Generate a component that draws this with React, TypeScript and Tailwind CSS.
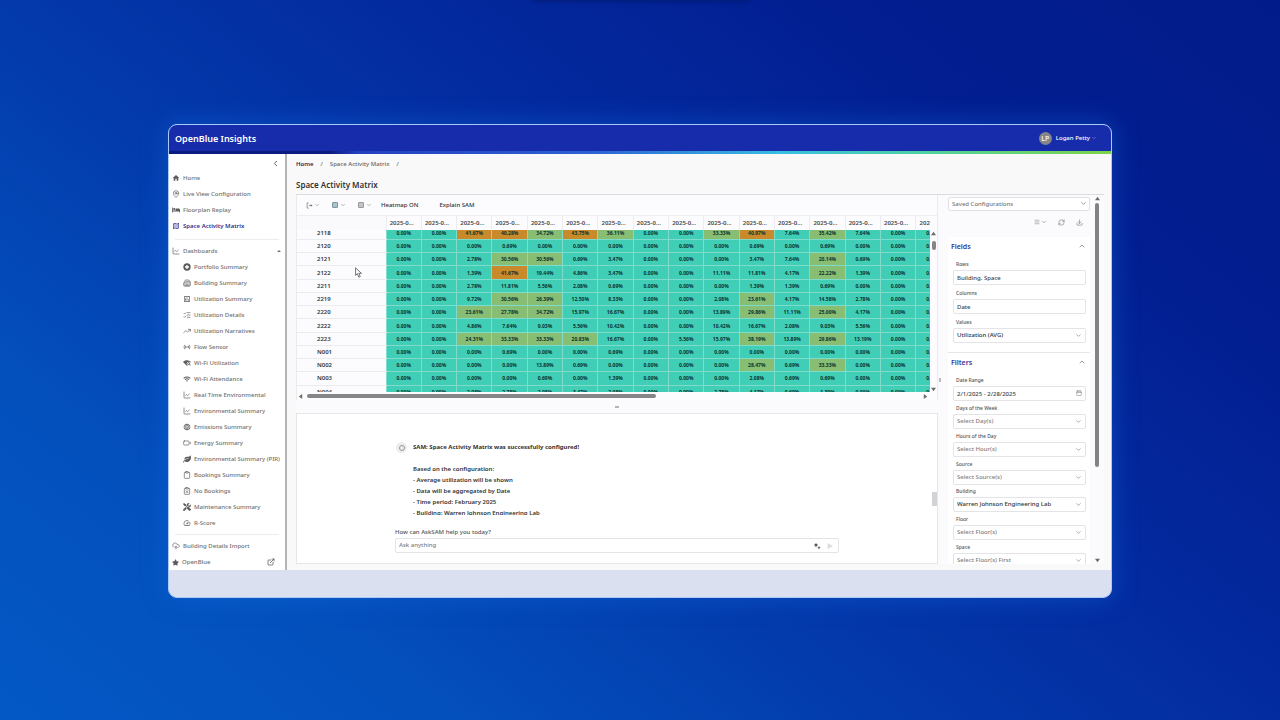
import type { ComponentType, ReactNode } from 'react';
import {
  Battery,
  Building2,
  Calendar,
  ChartLine,
  ChevronDown,
  ChevronLeft,
  ChevronUp,
  Clipboard,
  ClipboardX,
  CloudUpload,
  Download,
  ExternalLink,
  ListChecks,
  MapPin,
  Menu,
  RefreshCw,
  TrendingUp,
} from 'lucide-react';
import { FaBed, FaLeaf, FaStar, FaTools } from 'react-icons/fa';
import { MdHome, MdLanguage, MdOutlineAssessment, MdOutlineMap, MdOutlineSpeed, MdSensors, MdWifi, MdWifiFind } from 'react-icons/md';

type Icon = ComponentType<{ className?: string }>;

interface NavItem {
  label: string;
  icon: Icon;
  active?: boolean;
}

const PortfolioIcon: Icon = ({ className }) => (
  <svg className={className} viewBox="0 0 24 24">
    <circle cx="12" cy="12" r="11" fill="currentColor" />
    <path d="M12 6v12M6 12h12" stroke="white" strokeWidth="4" fill="none" />
  </svg>
);

const ExportIcon: Icon = ({ className }) => (
  <svg className={className} viewBox="0 0 24 24" fill="none" stroke="currentColor" strokeWidth="2.5">
    <path d="M9 3H4v18h5M10 12h11" />
    <path d="M16 7l6 5-6 5z" fill="currentColor" stroke="none" />
  </svg>
);

const SparkleIcon: Icon = ({ className }) => (
  <svg className={className} viewBox="0 0 24 24" fill="currentColor">
    <path d="M9 2l2 5 5 2-5 2-2 6-2-6-5-2 5-2z" />
    <path d="M18 12l1.500 3.500L23 17l-3.500 1.500L18 22l-1.500-3.500L13 17l3.500-1.500z" />
  </svg>
);

const SendIcon: Icon = ({ className }) => (
  <svg className={className} viewBox="0 0 24 24" fill="none" stroke="currentColor" strokeWidth="2.5">
    <path d="M4 3l17 9-17 9v-7l9-2-9-2z" />
  </svg>
);

const topNav: NavItem[] = [
  { label: 'Home', icon: MdHome },
  { label: 'Live View Configuration', icon: MapPin },
  { label: 'Floorplan Replay', icon: FaBed },
  { label: 'Space Activity Matrix', icon: MdOutlineMap, active: true },
];

const dashboards: NavItem[] = [
  { label: 'Portfolio Summary', icon: PortfolioIcon },
  { label: 'Building Summary', icon: Building2 },
  { label: 'Utilization Summary', icon: MdOutlineAssessment },
  { label: 'Utilization Details', icon: ListChecks },
  { label: 'Utilization Narratives', icon: TrendingUp },
  { label: 'Flow Sensor', icon: MdSensors },
  { label: 'Wi-Fi Utilization', icon: MdWifiFind },
  { label: 'Wi-Fi Attendance', icon: MdWifi },
  { label: 'Real Time Environmental', icon: ChartLine },
  { label: 'Environmental Summary', icon: ChartLine },
  { label: 'Emissions Summary', icon: MdLanguage },
  { label: 'Energy Summary', icon: Battery },
  { label: 'Environmental Summary (PIR)', icon: FaLeaf },
  { label: 'Bookings Summary', icon: Clipboard },
  { label: 'No Bookings', icon: ClipboardX },
  { label: 'Maintenance Summary', icon: FaTools },
  { label: 'R-Score', icon: MdOutlineSpeed },
];

const matrix: { space: string; values: number[] }[] = [
  { space: '2118', values: [0, 0, 41.67, 40.28, 34.72, 43.75, 36.11, 0, 0, 33.33, 40.97, 7.64, 35.42, 7.64, 0, 0] },
  { space: '2120', values: [0, 0, 0, 0.69, 0, 0, 0, 0, 0, 0, 0.69, 0, 0.69, 0, 0, 0] },
  { space: '2121', values: [0, 0, 2.78, 30.56, 30.56, 0.69, 3.47, 0, 0, 0, 3.47, 7.64, 20.14, 0.69, 0, 0] },
  { space: '2122', values: [0, 0, 1.39, 41.67, 19.44, 4.86, 3.47, 0, 0, 11.11, 11.81, 4.17, 22.22, 1.39, 0, 0] },
  { space: '2211', values: [0, 0, 2.78, 11.81, 5.56, 2.08, 0.69, 0, 0, 0, 1.39, 1.39, 0.69, 0, 0, 0] },
  { space: '2219', values: [0, 0, 9.72, 30.56, 26.39, 12.5, 8.33, 0, 0, 2.08, 23.61, 4.17, 14.58, 2.78, 0, 0] },
  { space: '2220', values: [0, 0, 23.61, 27.78, 34.72, 15.97, 16.67, 0, 0, 13.89, 29.86, 11.11, 25, 4.17, 0, 0] },
  { space: '2222', values: [0, 0, 4.86, 7.64, 9.03, 5.56, 10.42, 0, 0, 10.42, 16.67, 2.08, 9.03, 5.56, 0, 0] },
  { space: '2223', values: [0, 0, 24.31, 33.33, 33.33, 20.83, 16.67, 0, 5.56, 15.97, 38.19, 13.89, 29.86, 13.19, 0, 0] },
  { space: 'N001', values: [0, 0, 0, 0.69, 0, 0, 0.69, 0, 0, 0, 0, 0, 0, 0, 0, 0] },
  { space: 'N002', values: [0, 0, 0, 0, 13.89, 0.69, 0, 0, 0, 0, 28.47, 0.69, 33.33, 0, 0, 0] },
  { space: 'N003', values: [0, 0, 0, 0, 0.69, 0, 1.39, 0, 0, 0, 2.08, 0.69, 0.69, 0, 0, 0] },
  { space: 'N004', values: [0, 0, 2.08, 2.78, 2.08, 3.47, 2.08, 0, 0, 2.78, 4.17, 0.69, 1.39, 0, 0, 0] },
];

const filters = [
  { id: 'days', label: 'Days of the Week', value: 'Select Day(s)' },
  { id: 'hours', label: 'Hours of the Day', value: 'Select Hour(s)' },
  { id: 'source', label: 'Source', value: 'Select Source(s)' },
  { id: 'building', label: 'Building', value: 'Warren Johnson Engineering Lab', filled: true },
  { id: 'floor', label: 'Floor', value: 'Select Floor(s)' },
  { id: 'space', label: 'Space', value: 'Select Floor(s) First' },
];

// Heat levels: 40%+ is busy, 20%+ is moderate
const heatClass = (value: number) => {
  if (value >= 40) return 'bg-[#c98a2b]';
  if (value >= 20) return 'bg-[#88bd74]';
  return 'bg-[#41ceb7]';
};

function NavLink({ item, nested = false }: { item: NavItem; nested?: boolean }) {
  const ItemIcon = item.icon;
  return (
    <li>
      <a
        href="#"
        className={`flex h-4 items-center gap-[3px] whitespace-nowrap ${nested ? 'pl-[14px]' : 'pl-[3px]'} ${item.active ? 'font-semibold text-[#2f2f8c]' : 'font-medium text-[#717171]'}`}
      >
        <ItemIcon className={`size-2 shrink-0 ${item.active ? 'text-[#2f2f8c]' : 'text-[#5c5c5c]'}`} />
        {item.label}
      </a>
    </li>
  );
}

function Arrow({ dir }: { dir: 'up' | 'down' | 'left' | 'right' }) {
  const points = { up: '3,1 6,5 0,5', down: '0,1 6,1 3,5', left: '1,3 5,0 5,6', right: '5,3 1,0 1,6' };
  return (
    <svg className="size-[5px] shrink-0 text-[#6b6b6b]" viewBox="0 0 6 6">
      <polygon points={points[dir]} fill="currentColor" />
    </svg>
  );
}

function Columns() {
  return (
    <colgroup>
      <col className="w-[89px]" />
      {matrix[0].values.map((_, i) => (
        <col key={i} />
      ))}
    </colgroup>
  );
}

function Field({ id, label, children }: { id: string; label: string; children: ReactNode }) {
  return (
    <div className="flex flex-col">
      <label htmlFor={id} className="pl-[3px] text-[5px] leading-[11px] font-medium text-[#555]">
        {label}
      </label>
      {children}
    </div>
  );
}

function SelectBox({ id, value, filled = false }: { id: string; value: string; filled?: boolean }) {
  return (
    <div className="relative">
      <select
        id={id}
        className={`block h-[15px] w-full appearance-none rounded-[2px] border border-[#e4e4e6] bg-white pl-[3px] font-medium ${filled ? 'text-[#333]' : 'text-[#808080]'}`}
      >
        <option>{value}</option>
      </select>
      <ChevronDown className="pointer-events-none absolute top-1 right-1 size-[7px] text-[#777]" />
    </div>
  );
}

function SectionTitle({ children }: { children: ReactNode }) {
  return (
    <button className="flex h-[18px] w-full items-center justify-between text-[7px] font-semibold text-[#36368e]">
      {children}
      <ChevronUp className="size-2 text-[#666]" />
    </button>
  );
}

function Sidebar() {
  return (
    <nav className="flex w-[118px] shrink-0 flex-col border-r-2 border-[#b3b3b8] bg-white">
      <button aria-label="Collapse menu" className="flex h-4 items-center justify-end pt-[2px] pr-[5px]">
        <ChevronLeft className="size-[9px] text-[#333]" />
      </button>
      <ul>
        {topNav.map((item) => (
          <NavLink key={item.label} item={item} />
        ))}
      </ul>
      <div className="mx-[6px] mt-[5px] mb-[3px] border-t border-[#ececec]" />
      <button className="flex h-4 items-center gap-[3px] pr-1 pl-[3px] font-medium text-[#717171]">
        <ChartLine className="size-2 text-[#5c5c5c]" />
        <span className="flex-1 text-left">Dashboards</span>
        <svg className="h-[2px] w-1" viewBox="0 0 4 2">
          <polygon points="2,0 4,2 0,2" fill="currentColor" />
        </svg>
      </button>
      <ul>
        {dashboards.map((item) => (
          <NavLink key={item.label} item={item} nested />
        ))}
      </ul>
      <div className="mx-[6px] mt-[3px] mb-[3px] border-t border-[#ececec]" />
      <ul>
        <NavLink item={{ label: 'Building Details Import', icon: CloudUpload }} />
        <li>
          <a href="#" className="flex h-4 items-center gap-[3px] pr-[10px] pl-[3px] font-medium text-[#717171]">
            <FaStar className="size-[7px] text-[#5c5c5c]" />
            <span className="flex-1">OpenBlue</span>
            <ExternalLink className="size-2 text-[#444]" />
          </a>
        </li>
      </ul>
    </nav>
  );
}

function MatrixPanel() {
  return (
    <div className="border-x border-[#ebebee] bg-[#fcfcfe]">
      <div className="flex h-[21px] items-center border-b border-[#eeeef1] pl-[9px] font-medium text-[#333]">
        <button aria-label="Export" className="mr-3 flex items-center gap-px text-[#777]">
          <ExportIcon className="size-[7px]" />
          <ChevronDown className="size-[6px]" />
        </button>
        <button aria-label="Expand" className="mr-3 flex items-center gap-[2px] text-[#777]">
          <span className="size-[6px] rounded-[1px] border border-[#7d959d] bg-[#a8c4ca]" />
          <ChevronDown className="size-[6px]" />
        </button>
        <button aria-label="Collapse" className="mr-[9px] flex items-center gap-[2px] text-[#777]">
          <span className="size-[6px] rounded-[1px] border border-[#999] bg-[#c4c4c4]" />
          <ChevronDown className="size-[6px]" />
        </button>
        <button className="mr-[21px]">Heatmap ON</button>
        <button>Explain SAM</button>
      </div>

      <div className="flex">
        <div className="min-w-0 flex-1 overflow-hidden">
          <table className="w-[654px] table-fixed border-collapse">
            <Columns />
            <thead>
              <tr className="h-[14px] leading-[8px] text-[#444]">
                <th aria-label="Space" className="bg-[#fafafc] p-0"></th>
                {matrix[0].values.map((_, i) => (
                  <th key={i} className="border-l border-[#ececf0] p-0 pr-1 text-center font-semibold">
                    2025-0...
                  </th>
                ))}
              </tr>
            </thead>
          </table>
          {/* Scrolled a few pixels, so the first and last rows are cut */}
          <div className="h-[162px] overflow-hidden">
            <table className="-mt-[3px] h-[172px] w-[654px] table-fixed border-collapse">
              <Columns />
              <tbody>
                {matrix.map((row) => (
                  <tr key={row.space}>
                    <th scope="row" className="border-b border-[#ececf0] p-0 pl-5 text-left leading-[8px] font-semibold text-[#333]">
                      {row.space}
                    </th>
                    {row.values.map((value, i) => (
                      <td
                        key={i}
                        className={`border-b border-l border-[#7fdccb] p-0 text-center text-[5px] leading-[8px] font-bold text-[#0b332e] ${heatClass(value)}`}
                      >
                        {value.toFixed(2)}%
                      </td>
                    ))}
                  </tr>
                ))}
              </tbody>
            </table>
          </div>
        </div>
        <div className="flex w-[7px] flex-col items-center pt-[15px]">
          <Arrow dir="up" />
          <div className="mt-[5px] h-[9px] w-1 rounded-full bg-[#858585]" />
          <div className="flex-1" />
          <Arrow dir="down" />
        </div>
      </div>

      <div className="flex h-2 items-center gap-1 pr-[9px] pl-px">
        <Arrow dir="left" />
        <div className="flex-1">
          <div className="h-1 w-[57%] rounded-full bg-[#858588]" />
        </div>
        <Arrow dir="right" />
      </div>
    </div>
  );
}

function ChatPanel() {
  return (
    <div className="flex flex-1 border border-[#e6e6e9] bg-white">
      <div className="flex flex-1 flex-col pt-7 pl-[98px]">
        <div className="flex h-[73px] gap-[6px] overflow-hidden pl-px leading-[11px] font-semibold text-[#333]">
          <span className="flex size-[11px] items-center justify-center rounded-full bg-[#ededed]">
            <span className="size-[6px] rounded-full border border-[#999]" />
          </span>
          <div>
            <p className="font-bold">SAM: Space Activity Matrix was successfully configured!</p>
            <p className="mt-[11px]">Based on the configuration:</p>
            <p>- Average utilization will be shown</p>
            <p>- Data will be aggregated by Date</p>
            <p>- Time period: February 2025</p>
            <p>- Building: Warren Johnson Engineering Lab</p>
          </div>
        </div>
        <label htmlFor="ask" className="mt-3 leading-[11px] font-medium text-[#555]">
          How can AskSAM help you today?
        </label>
        <div className="mr-[93px] flex h-[15px] items-center rounded-[2px] border border-[#e4e4e6] pr-[5px] pl-[3px]">
          <input id="ask" placeholder="Ask anything" className="min-w-0 flex-1 font-medium outline-none placeholder:text-[#808080]" />
          <button aria-label="Suggestions" className="mr-[6px]">
            <SparkleIcon className="size-2 text-[#444]" />
          </button>
          <button aria-label="Send">
            <SendIcon className="size-[6px] text-[#c4c4c4]" />
          </button>
        </div>
      </div>
      <div className="flex flex-col items-end pt-[78px]">
        <div className="h-[14px] w-[5px] bg-[#d3d3d6]" />
      </div>
    </div>
  );
}

function ConfigPanel() {
  return (
    <aside className="flex w-[162px] shrink-0">
      <div className="min-w-0 flex-1 overflow-hidden pt-[2px] pl-[6px]">
        <div className="relative">
          <select
            aria-label="Saved Configurations"
            className="block h-[14px] w-full appearance-none rounded-[2px] border border-[#e0e0e3] bg-white pl-[3px] font-medium text-[#777]"
          >
            <option>Saved Configurations</option>
          </select>
          <ChevronDown className="pointer-events-none absolute top-[3px] right-[3px] size-[7px] text-[#555]" />
        </div>
        <div className="mb-1 flex h-[22px] items-center justify-end gap-[11px] pr-[7px] text-[#777]">
          <button aria-label="View options" className="flex items-center gap-px">
            <Menu className="size-[6px]" />
            <ChevronDown className="size-[6px]" />
          </button>
          <button aria-label="Refresh">
            <RefreshCw className="size-[7px]" />
          </button>
          <button aria-label="Download">
            <Download className="size-[7px]" />
          </button>
        </div>

        <section className="bg-white pr-1 pl-[3px]">
          <SectionTitle>Fields</SectionTitle>
          <div className="flex flex-col gap-[3px] pt-1 pb-[9px] pl-[2px]">
            <Field id="rows" label="Rows">
              <input id="rows" defaultValue="Building, Space" className="h-[15px] rounded-[2px] border border-[#e4e4e6] bg-white pl-[3px] font-medium text-[#444]" />
            </Field>
            <Field id="columns" label="Columns">
              <input id="columns" defaultValue="Date" className="h-[15px] rounded-[2px] border border-[#e4e4e6] bg-white pl-[3px] font-medium text-[#444]" />
            </Field>
            <Field id="values" label="Values">
              <SelectBox id="values" value="Utilization (AVG)" filled />
            </Field>
          </div>
        </section>

        <section className="border-t border-[#e6e6e9] bg-white pr-1 pl-[3px]">
          <SectionTitle>Filters</SectionTitle>
          <div className="grid h-[199px] auto-rows-fr pt-1 pl-[2px]">
            <Field id="range" label="Date Range">
              <div className="relative">
                <input id="range" defaultValue="2/1/2025 - 2/28/2025" className="block h-[15px] w-full rounded-[2px] border border-[#e4e4e6] bg-white pl-[3px] font-medium text-[#444]" />
                <Calendar className="absolute top-1 right-1 size-[6px] text-[#777]" />
              </div>
            </Field>
            {filters.map((f) => (
              <Field key={f.id} id={f.id} label={f.label}>
                <SelectBox id={f.id} value={f.value} filled={f.filled} />
              </Field>
            ))}
          </div>
        </section>
      </div>
      <div className="flex w-[14px] flex-col items-center py-px">
        <Arrow dir="up" />
        <div className="mt-[2px] h-[264px] w-1 rounded-full bg-[#828286]" />
        <div className="flex-1" />
        <Arrow dir="down" />
      </div>
    </aside>
  );
}

export default function App() {
  return (
    <div className="relative min-h-screen overflow-hidden bg-[linear-gradient(38deg,#0358c5_0%,#0350bd_20%,#033bac_40%,#032a9f_60%,#021e90_80%,#021b8a_100%)] px-[168px] pt-[124px] pb-[122px] font-['Noto_Sans',sans-serif] text-[6px] leading-[9px]">
      <div className="absolute -top-[10px] left-1/2 h-[10px] w-[220px] -translate-x-1/2 rounded-full bg-[#020f52] opacity-70 blur-[3px]" />
      <div className="relative overflow-hidden rounded-[9px] border border-[#a9c9f7] bg-[#dae0ef] shadow-[0_0_24px_2px_rgba(20,110,225,0.4)]">
        <header className="flex h-[26px] items-center justify-between bg-[#162cab] pr-[14px] pl-[6px] text-white">
          <h1 className="text-[9px] font-semibold">OpenBlue Insights</h1>
          <button className="flex items-center gap-1 font-medium">
            <span className="flex size-[13px] items-center justify-center rounded-full bg-[#85858a] text-[7px]">LP</span>
            <span className="flex items-center gap-px">
              Logan Petty
              <ChevronDown className="size-[6px] text-[#9aa6dd]" />
            </span>
          </button>
        </header>
        <div className="h-[3px] bg-[linear-gradient(90deg,#0b1a80_0%,#0b1a80_17%,#2440c0_20%,#2c62d4_45%,#39bfe0_65%,#4fd0a0_80%,#7ed348_100%)]" />

        <div className="flex bg-[#f9f9fa]">
          <Sidebar />
          <main className="flex min-w-0 flex-1 flex-col pl-[9px]">
            <div className="flex h-[21px] items-center gap-[7px] font-medium text-[#666]">
              <a href="#" className="font-semibold text-[#2b2b55]">
                Home
              </a>
              <span>/</span>
              <a href="#">Space Activity Matrix</a>
              <span>/</span>
            </div>
            <h2 className="flex h-[19px] items-center text-[8px] font-semibold text-[#333]">Space Activity Matrix</h2>
            <div className="mr-[7px] flex h-[370px] border-t border-[#dcdce0] bg-[#fbfbfd]">
              <div className="flex min-w-0 flex-1 flex-col">
                <MatrixPanel />
                <div className="flex h-[13px] items-center justify-center">
                  <span className="h-[2px] w-1 bg-[#b5b5b8]" />
                </div>
                <ChatPanel />
              </div>
              <div className="flex w-1 items-center justify-center">
                <span className="h-1 w-[2px] bg-[#bbb]" />
              </div>
              <ConfigPanel />
            </div>
          </main>
        </div>
        <div className="h-[27px]" />

        {/* Mouse pointer */}
        <svg className="absolute top-[142px] left-[186px] h-[11px] w-[7px]" viewBox="0 0 12 18">
          <path d="M1 1v13l3-3 2.500 6 2.500-1-2.500-5.500h4.500z" fill="white" stroke="#555" strokeWidth="1.400" />
        </svg>
      </div>
    </div>
  );
}
